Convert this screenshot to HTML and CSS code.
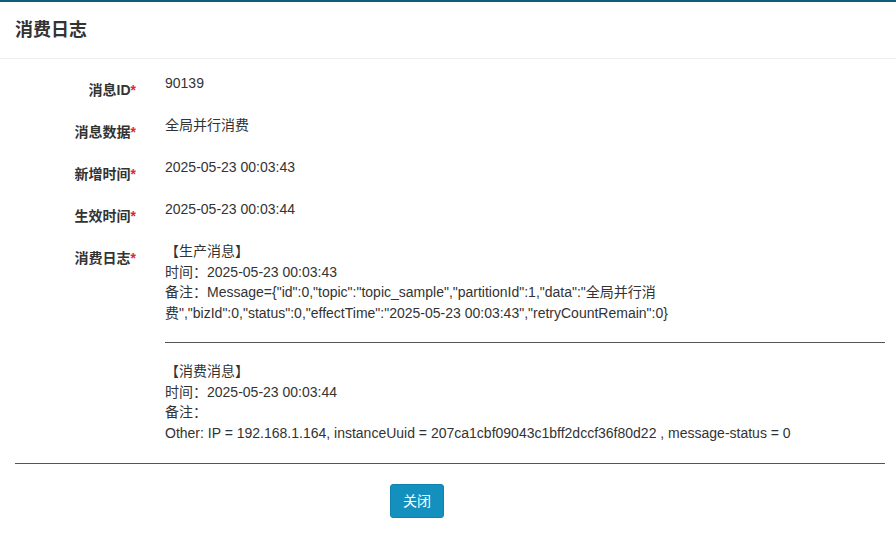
FILE: index.html
```html
<!DOCTYPE html>
<html lang="zh-CN">
<head>
<meta charset="utf-8">
<title>消费日志</title>
<link rel="stylesheet" href="styles.css">
</head>
<body>
<div class="modal">
  <div class="modal-header">
    <h4 class="modal-title">消费日志</h4>
  </div>
  <div class="modal-body">
    <div class="form-row">
      <label class="form-label">消息ID<span class="req">*</span></label>
      <div class="form-value">90139</div>
    </div>
    <div class="form-row">
      <label class="form-label">消息数据<span class="req">*</span></label>
      <div class="form-value">全局并行消费</div>
    </div>
    <div class="form-row">
      <label class="form-label">新增时间<span class="req">*</span></label>
      <div class="form-value">2025-05-23 00:03:43</div>
    </div>
    <div class="form-row">
      <label class="form-label">生效时间<span class="req">*</span></label>
      <div class="form-value">2025-05-23 00:03:44</div>
    </div>
    <div class="form-row">
      <label class="form-label">消费日志<span class="req">*</span></label>
      <div class="form-value log">
        <div class="log-block">
          <div>【生产消息】</div>
          <div>时间：2025-05-23 00:03:43</div>
          <div>备注：Message={"id":0,"topic":"topic_sample","partitionId":1,"data":"全局并行消费","bizId":0,"status":0,"effectTime":"2025-05-23 00:03:43","retryCountRemain":0}</div>
        </div>
        <hr class="log-sep">
        <div class="log-block">
          <div>【消费消息】</div>
          <div>时间：2025-05-23 00:03:44</div>
          <div>备注：</div>
          <div>Other: IP = 192.168.1.164, instanceUuid = 207ca1cbf09043c1bff2dccf36f80d22 , message-status = 0</div>
        </div>
      </div>
    </div>
    <hr class="footer-sep">
    <div class="actions">
      <button class="btn-close" type="button">关闭</button>
    </div>
  </div>
</div>
</body>
</html>
```

FILE: styles.css
```css
html, body {
  margin: 0;
  padding: 0;
  background: #ffffff;
}

body {
  font-family: "Liberation Sans", "Noto Sans CJK SC", sans-serif;
  font-size: 14px;
  color: #333333;
}

.modal {
  border-top: 2px solid #0d5f78;
}

.modal-header {
  height: 56px;
  padding: 0 15px;
  display: flex;
  align-items: center;
  border-bottom: 1px solid #ececec;
}

.modal-title {
  margin: 0;
  font-size: 18px;
  font-weight: 600;
  color: #333333;
  line-height: 20px;
}

.modal-body {
  padding: 14px 11px 0 15px;
}

.form-row {
  display: flex;
  margin-bottom: 15px;
}

.form-label {
  width: 121px;
  flex: none;
  text-align: right;
  font-weight: 700;
  padding-top: 7px;
  line-height: 20px;
  color: #333333;
}

.req {
  color: #e4262b;
}

.form-value {
  flex: 1;
  margin-left: 29px;
  line-height: 20px;
}

.log {
  line-height: 20.7px;
}

.log-sep {
  border: 0;
  border-top: 1px solid #555555;
  margin: 18px 0 18px;
  height: 0;
}

.footer-sep {
  border: 0;
  border-top: 1px solid #555555;
  margin: 19px 0 20px;
  height: 0;
}

.actions {
  display: flex;
  padding-left: 375px;
}

.btn-close {
  font-family: "Liberation Sans", "Noto Sans CJK SC", sans-serif;
  font-size: 14px;
  line-height: 20px;
  color: #ffffff;
  background: #1490bf;
  border: 1px solid #0f84b0;
  border-radius: 3px;
  padding: 6px 12px;
  cursor: pointer;
}
```
